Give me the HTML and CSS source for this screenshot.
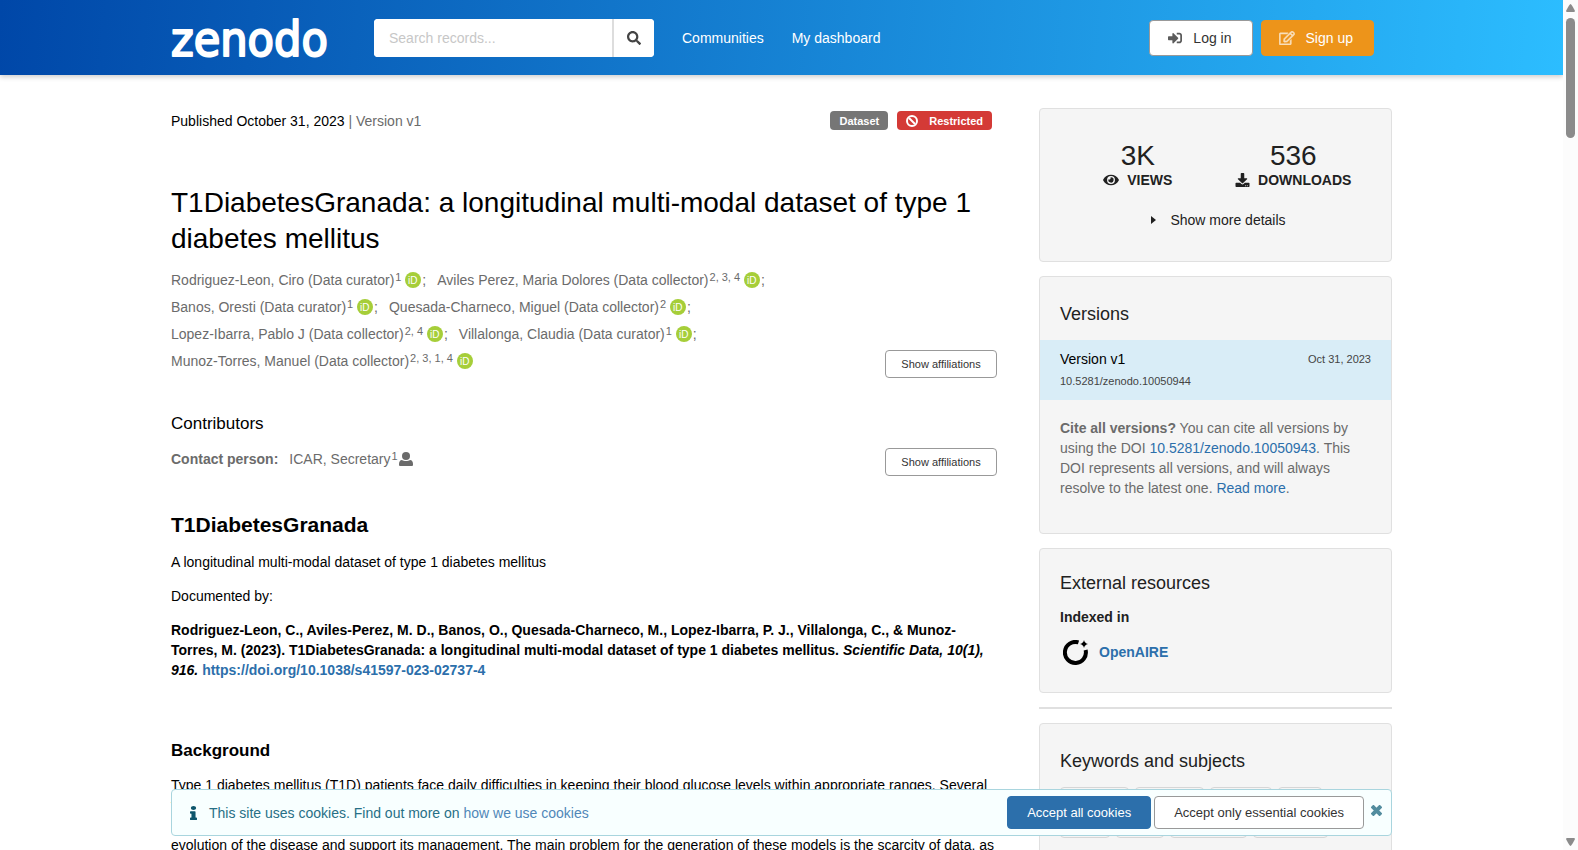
FILE: index.html
```html
<!DOCTYPE html>
<html lang="en">
<head>
    <meta charset="UTF-8">
    <meta name="viewport" content="width=device-width, initial-scale=1.0">
    <title>T1DiabetesGranada: a longitudinal multi-modal dataset of type 1 diabetes mellitus</title>
    <link rel="stylesheet" href="styles.css">
</head>
<body>
    <!-- Shared icons -->
    <svg class="sprite" aria-hidden="true">
        <symbol id="orcid" viewBox="0 0 16 16">
            <circle cx="8" cy="8" r="8" fill="#a6ce39"/>
            <text x="3" y="12" font-family="Liberation Sans, sans-serif" font-size="10" fill="#fff">iD</text>
        </symbol>
    </svg>

    <header class="header">
        <div class="container header-inner">
            <a href="#" class="logo" aria-label="Zenodo home">
                <svg width="160" height="60" viewBox="0 0 160 60">
                    <text x="0" y="48" class="logo-text">zenodo</text>
                </svg>
            </a>
            <form class="search">
                <input type="text" placeholder="Search records..." aria-label="Search records">
                <button type="button" aria-label="Search">
                    <svg width="14" height="14" viewBox="0 0 512 512"><path d="M505 442.700L405.300 343c-4.500-4.500-10.600-7-17-7H372c27.600-35.300 44-79.700 44-128C416 93.100 322.900 0 208 0S0 93.100 0 208s93.100 208 208 208c48.300 0 92.700-16.400 128-44v16.300c0 6.400 2.500 12.500 7 17l99.700 99.700c9.400 9.400 24.600 9.400 33.900 0l28.300-28.300c9.400-9.400 9.400-24.600.1-34zM208 336c-70.700 0-128-57.200-128-128 0-70.700 57.200-128 128-128 70.700 0 128 57.200 128 128 0 70.700-57.200 128-128 128z"/></svg>
                </button>
            </form>
            <nav class="nav">
                <a href="#">Communities</a>
                <a href="#">My dashboard</a>
            </nav>
            <div class="account">
                <button class="button login">
                    <svg width="14" height="14" viewBox="0 0 512 512"><path d="M416 448h-84c-6.600 0-12-5.400-12-12v-40c0-6.600 5.400-12 12-12h84c17.700 0 32-14.300 32-32V160c0-17.700-14.300-32-32-32h-84c-6.600 0-12-5.400-12-12V76c0-6.600 5.400-12 12-12h84c53 0 96 43 96 96v192c0 53-43 96-96 96zm-47-201L201 79c-15-15-41-4.500-41 17v96H24c-13.300 0-24 10.700-24 24v96c0 13.300 10.700 24 24 24h136v96c0 21.500 26 32 41 17l168-168c9.300-9.400 9.300-24.600 0-34z"/></svg>
                    Log in
                </button>
                <button class="button signup">
                    <svg width="16" height="14" viewBox="0 0 576 512"><path d="M402.300 344.900l32-32c5-5 13.700-1.500 13.700 5.700V464c0 26.500-21.500 48-48 48H48c-26.500 0-48-21.500-48-48V112c0-26.500 21.500-48 48-48h273.500c7.100 0 10.700 8.600 5.700 13.700l-32 32c-1.500 1.500-3.500 2.300-5.700 2.300H48v352h352V350.500c0-2.100.8-4.100 2.300-5.600zm156.600-201.800L296.300 405.700l-90.400 10c-26.200 2.900-48.500-19.200-45.600-45.600l10-90.400L432.900 17.100c22.900-22.900 59.900-22.900 82.700 0l43.200 43.200c22.900 22.900 22.900 60 .1 82.800zM460.100 174L402 115.900 216.200 301.800l-7.300 65.300 65.300-7.300L460.100 174zm64.800-79.700l-43.200-43.200c-4.100-4.100-10.800-4.100-14.800 0L436 82l58.100 58.100 30.900-30.900c4-4.200 4-10.800-.1-14.900z" stroke="currentColor" stroke-width="16"/></svg>
                    Sign up
                </button>
            </div>
        </div>
    </header>

    <div class="container page">
        <main class="record">
            <div class="record-top">
                <div>Published October 31, 2023 <span class="muted">| Version v1</span></div>
                <div class="labels">
                    <span class="label">Dataset</span>
                    <span class="label restricted">
                        <svg width="12" height="12" viewBox="0 0 12 12"><circle cx="6" cy="6" r="5" fill="none" stroke="currentColor" stroke-width="2"/><path d="M3 3l6 6" stroke="currentColor" stroke-width="2"/></svg>
                        Restricted
                    </span>
                </div>
            </div>

            <h1>T1DiabetesGranada: a longitudinal multi-modal dataset of type 1 diabetes mellitus</h1>

            <div class="people">
                <ul class="creators">
                    <li>Rodriguez-Leon, Ciro (Data curator)<sup>1</sup> <svg class="orcid"><use href="#orcid"/></svg>;</li>
                    <li>Aviles Perez, Maria Dolores (Data collector)<sup>2, 3, 4</sup> <svg class="orcid"><use href="#orcid"/></svg>;</li>
                    <li>Banos, Oresti (Data curator)<sup>1</sup> <svg class="orcid"><use href="#orcid"/></svg>;</li>
                    <li>Quesada-Charneco, Miguel (Data collector)<sup>2</sup> <svg class="orcid"><use href="#orcid"/></svg>;</li>
                    <li>Lopez-Ibarra, Pablo J (Data collector)<sup>2, 4</sup> <svg class="orcid"><use href="#orcid"/></svg>;</li>
                    <li>Villalonga, Claudia (Data curator)<sup>1</sup> <svg class="orcid"><use href="#orcid"/></svg>;</li>
                    <li>Munoz-Torres, Manuel (Data collector)<sup>2, 3, 1, 4</sup> <svg class="orcid"><use href="#orcid"/></svg></li>
                </ul>
                <button class="button small">Show affiliations</button>
            </div>

            <h2 class="contributors-title">Contributors</h2>
            <div class="contributors">
                <div class="contact">
                    <strong>Contact person:</strong>
                    <span>ICAR, Secretary<sup>1</sup><svg width="14" height="14" viewBox="0 0 14 14"><circle cx="7" cy="4" r="4"/><path d="M0 13v-1c0-2 1-4 3-4 2 1.400 6 1.400 8 0 2 0 3 2 3 4v1q0 1-1 1H1q-1 0-1-1z"/></svg></span>
                </div>
                <button class="button small">Show affiliations</button>
            </div>

            <section class="description">
                <h2>T1DiabetesGranada</h2>
                <p>A longitudinal multi-modal dataset of type 1 diabetes mellitus</p>
                <p>Documented by:</p>
                <p><strong>Rodriguez-Leon, C., Aviles-Perez, M. D., Banos, O., Quesada-Charneco, M., Lopez-Ibarra, P. J., Villalonga, C., &amp; Munoz-Torres, M. (2023). T1DiabetesGranada: a longitudinal multi-modal dataset of type 1 diabetes mellitus. <em>Scientific Data, 10(1), 916.</em> <a href="#">https://doi.org/10.1038/s41597-023-02737-4</a></strong></p>
                <h3>Background</h3>
                <p>Type 1 diabetes mellitus (T1D) patients face daily difficulties in keeping their blood glucose levels within appropriate ranges. Several techniques and devices, such as flash glucose meters, have been developed to help T1D patients improve their quality of life. Most recently, the data collected via these devices is being used to train advanced artificial intelligence models to characterize the evolution of the disease and support its management. The main problem for the generation of these models is the scarcity of data, as most published works use private or artificially generated datasets.</p>
            </section>
        </main>

        <aside class="sidebar">
            <section class="panel stats">
                <div class="stats-row">
                    <div class="stat">
                        <div class="stat-value">3K</div>
                        <div class="stat-name">
                            <svg width="16" height="14" viewBox="0 0 576 512"><path d="M572.520 241.400C518.290 135.590 410.930 64 288 64S57.680 135.640 3.480 241.410a32.350 32.350 0 0 0 0 29.190C57.710 376.410 165.070 448 288 448s230.320-71.640 284.520-177.410a32.350 32.350 0 0 0 0-29.190zM288 400a144 144 0 1 1 144-144 143.930 143.930 0 0 1-144 144zm0-240a95.310 95.310 0 0 0-25.310 3.790 47.850 47.850 0 0 1-66.900 66.900A95.780 95.780 0 1 0 288 160z"/></svg>
                            VIEWS
                        </div>
                    </div>
                    <div class="stat">
                        <div class="stat-value">536</div>
                        <div class="stat-name">
                            <svg width="15" height="14" viewBox="0 0 512 512"><path d="M216 0h80c13.300 0 24 10.700 24 24v168h87.700c17.800 0 26.700 21.500 14.100 34.100L269.700 378.300c-7.500 7.500-19.800 7.500-27.300 0L90.100 226.100c-12.600-12.600-3.700-34.100 14.100-34.100H192V24c0-13.300 10.700-24 24-24zm296 376v112c0 13.300-10.700 24-24 24H24c-13.300 0-24-10.700-24-24V376c0-13.300 10.700-24 24-24h146.700l49 49c20.100 20.100 52.500 20.100 72.600 0l49-49H488c13.300 0 24 10.700 24 24zm-124 88c0-11-9-20-20-20s-20 9-20 20 9 20 20 20 20-9 20-20zm64 0c0-11-9-20-20-20s-20 9-20 20 9 20 20 20 20-9 20-20z"/></svg>
                            DOWNLOADS
                        </div>
                    </div>
                </div>
                <button class="details">
                    <svg width="5" height="8" viewBox="0 0 5 8"><path d="M0 0l5 4-5 4z"/></svg>
                    Show more details
                </button>
            </section>

            <section class="panel versions">
                <h2>Versions</h2>
                <div class="version">
                    <div class="version-row">
                        <span>Version v1</span>
                        <small>Oct 31, 2023</small>
                    </div>
                    <small>10.5281/zenodo.10050944</small>
                </div>
                <p><strong>Cite all versions?</strong> You can cite all versions by using the DOI <a href="#">10.5281/zenodo.10050943</a>. This DOI represents all versions, and will always resolve to the latest one. <a href="#">Read more</a>.</p>
            </section>

            <section class="panel external">
                <h2>External resources</h2>
                <h3>Indexed in</h3>
                <a href="#" class="openaire">
                    <svg width="25" height="25" viewBox="0 0 25 25"><path d="M15.500 2.400A10.500 10.500 0 1 0 22.600 10" fill="none" stroke="#000" stroke-width="4"/><path d="M21 0q.6 3 4 4-3.400.8-4 4-.6-3.200-4-4 3.400-1 4-4z"/></svg>
                    OpenAIRE
                </a>
            </section>

            <hr>

            <section class="panel keywords">
                <h2>Keywords and subjects</h2>
                <div class="tags">
                    <a href="#">Monitoring</a>
                    <a href="#">Long-term</a>
                    <a href="#">Modeling</a>
                    <a href="#">CGM</a>
                    <a href="#">Health</a>
                    <a href="#">T1DM</a>
                    <a href="#">Longitudinal</a>
                    <a href="#">Multi-modal</a>
                </div>
            </section>
        </aside>
    </div>

    <div class="cookies-wrap">
        <div class="container cookies">
            <svg width="7" height="14" viewBox="0 0 192 512" preserveAspectRatio="none"><path d="M20 424.229h20V279.771H20c-11.046 0-20-8.954-20-20V212c0-11.046 8.954-20 20-20h112c11.046 0 20 8.954 20 20v212.229h20c11.046 0 20 8.954 20 20V492c0 11.046-8.954 20-20 20H20c-11.046 0-20-8.954-20-20v-47.771c0-11.046 8.954-20 20-20zM96 0C56.235 0 24 32.235 24 72s32.235 72 72 72 72-32.235 72-72S135.764 0 96 0z"/></svg>
            <p>This site uses cookies. Find out more on <a href="#">how we use cookies</a></p>
            <button class="button accept">Accept all cookies</button>
            <button class="button">Accept only essential cookies</button>
            <button class="close" aria-label="Close">
                <svg width="11" height="11" viewBox="0 0 11 11"><path d="M1 1l9 9M10 1l-9 9" stroke="currentColor" stroke-width="4"/></svg>
            </button>
        </div>
    </div>

    <div class="scrollbar">
        <svg width="9" height="8" viewBox="0 0 9 8"><path d="M4.500 0q1 0 4.500 7-.3 1-1 1H1q-.7 0-1-1Q3.500 0 4.500 0z"/></svg>
        <div class="thumb"></div>
        <svg width="9" height="8" viewBox="0 0 9 8"><path d="M4.500 8q-1 0-4.500-7 .3-1 1-1h7q.7 0 1 1-3.500 7-4.500 7z"/></svg>
    </div>
</body>
</html>
```
FILE: styles.css
```css
* {
    box-sizing: border-box;
}

body {
    margin: 0;
    padding-right: 15px;
    height: 100vh;
    overflow: hidden;
    font-family: "Liberation Sans", Arial, Helvetica, sans-serif;
    font-size: 14px;
    line-height: 20px;
    color: #000;
    background: #fff;
}

h1, h2, h3, p, ul {
    margin: 0;
    padding: 0;
}

a {
    color: #2c6fab;
    text-decoration: none;
}

button, input {
    font-family: inherit;
    font-size: 14px;
}

button {
    cursor: pointer;
}

svg {
    fill: currentColor;
    flex-shrink: 0;
}

sup {
    font-size: 11px;
    line-height: 0;
    vertical-align: 4px;
    margin-left: 1px;
}

.sprite {
    display: none;
}

.container {
    width: 100%;
    max-width: 1221px;
    margin: 0 auto;
}

/* Header */
.header {
    background: linear-gradient(95deg, #0047a8, #2cbdff);
    box-shadow: 0 2px 5px rgba(0, 0, 0, 0.2);
}

.header-inner {
    display: flex;
    align-items: center;
    height: 75px;
    padding-right: 18px;
}

.logo {
    height: 60px;
    margin-right: 43px;
}

.logo svg {
    display: block;
    overflow: visible;
}

.logo-text {
    font-family: "DejaVu Sans Condensed", "Liberation Sans", sans-serif;
    font-size: 48px;
    fill: #fff;
    stroke: #fff;
    stroke-width: 2px;
    stroke-linejoin: round;
}

.search {
    display: flex;
    width: 280px;
    height: 38px;
    border-radius: 4px;
    background: #fff;
    overflow: hidden;
}

.search input {
    flex: 1;
    min-width: 0;
    padding: 0 15px;
    border: none;
    outline: none;
}

.search input::placeholder {
    color: #c7c7c7;
}

.search button {
    width: 42px;
    padding: 0;
    border: none;
    border-left: 2px solid #ddd;
    background: #fff;
    color: #444;
}

.search button svg {
    display: block;
    margin: 0 auto;
}

.nav {
    display: flex;
    gap: 28px;
    margin-left: 28px;
}

.nav a {
    color: #fff;
}

.account {
    display: flex;
    gap: 8px;
    margin-left: auto;
}

.button {
    display: flex;
    flex-shrink: 0;
    align-items: center;
    justify-content: center;
    height: 33px;
    padding: 0 19px;
    border: 1px solid #999;
    border-radius: 4px;
    background: #fff;
    color: #333;
    font-size: 13px;
    white-space: nowrap;
}

.account .button {
    gap: 11px;
    height: 36px;
    padding: 0 20px 0 18px;
    font-size: 14px;
}

.account svg {
    opacity: 0.8;
}

.account .signup {
    padding-left: 17px;
    border-color: #ed941a;
    background: #ed941a;
    color: #fff;
}

.account .signup svg {
    opacity: 0.7;
}

.button.small {
    width: 112px;
    height: 28px;
    padding: 0;
    font-size: 11px;
}

/* Record */
.page {
    display: grid;
    grid-template-columns: minmax(0, 1fr) 353px;
    gap: 42px;
    padding-top: 33px;
}

.record-top {
    display: flex;
    justify-content: space-between;
    padding: 3px 5px 0 0;
    margin-bottom: 54px;
}

.muted {
    color: #6b6b6b;
}

.labels {
    display: flex;
    align-items: flex-start;
    gap: 9px;
}

.label {
    display: flex;
    align-items: center;
    gap: 11px;
    height: 19px;
    padding: 0 9px;
    border-radius: 4px;
    background: #767676;
    color: #fff;
    font-size: 11px;
    font-weight: bold;
}

.label.restricted {
    background: #d43a36;
}

h1 {
    font-size: 28px;
    line-height: 36px;
    font-weight: normal;
    margin-bottom: 10px;
}

.people {
    display: flex;
    align-items: flex-end;
    justify-content: space-between;
    gap: 14px;
}

.creators {
    display: flex;
    flex-wrap: wrap;
    column-gap: 11px;
    margin-bottom: 3px;
    list-style: none;
    line-height: 27px;
    color: #6b6b6b;
}

.orcid {
    width: 16px;
    height: 16px;
    margin-right: 1px;
    vertical-align: -3px;
}

.contributors-title {
    margin: 35px 0 13px;
    font-size: 17px;
    line-height: 22px;
    font-weight: normal;
}

.contributors {
    display: flex;
    justify-content: space-between;
    margin-bottom: 35px;
}

.contact {
    display: flex;
    gap: 11px;
    padding-top: 1px;
    color: #6b6b6b;
}

.contact svg {
    margin-left: 1px;
    vertical-align: -2px;
}

.description h2 {
    font-size: 21px;
    line-height: 27px;
    margin-bottom: 14px;
}

.description h3 {
    font-size: 17px;
    line-height: 22px;
    margin: 60px 0 13px;
}

.description p {
    margin-bottom: 14px;
}

/* Sidebar */
.sidebar {
    display: flex;
    flex-direction: column;
    gap: 14px;
    color: #212121;
}

.panel {
    padding: 25px 20px 35px;
    border: 1px solid #e0e0e0;
    border-radius: 4px;
    background: #f5f5f5;
}

.panel h2 {
    font-size: 18px;
    line-height: 24px;
    font-weight: normal;
}

.stats {
    padding: 33px 20px 31px;
}

.stats-row {
    display: grid;
    grid-template-columns: 1fr 1fr;
    margin-bottom: 20px;
    text-align: center;
}

.stat-value {
    font-size: 28px;
    line-height: 28px;
}

.stat-name {
    display: flex;
    align-items: center;
    justify-content: center;
    gap: 8px;
    font-weight: bold;
}

.details {
    display: flex;
    align-items: center;
    gap: 14px;
    margin: 0 auto;
    padding: 0 0 0 6px;
    border: none;
    background: none;
    color: inherit;
    line-height: 20px;
}

.versions h2 {
    margin-bottom: 14px;
}

.version {
    height: 60px;
    margin: 0 -20px 18px;
    padding: 9px 20px;
    background: #d9edf7;
    color: #000;
}

.version-row {
    display: flex;
    justify-content: space-between;
    margin-bottom: 1px;
}

.version small {
    font-size: 11px;
    color: #444;
}

.versions p {
    color: #6b6b6b;
}

.external {
    padding: 22px 20px 26px;
}

.external h3 {
    margin: 12px 0 11px;
    font-size: 14px;
    line-height: 20px;
}

.openaire {
    display: flex;
    align-items: center;
    gap: 11px;
    padding-left: 3px;
    font-weight: bold;
    line-height: 28px;
}

.openaire svg {
    fill: #000;
}

hr {
    width: 100%;
    margin: 0;
    border: none;
    border-top: 2px solid #e0e0e0;
}

.tags {
    display: flex;
    flex-wrap: wrap;
    gap: 5px 6px;
    margin-top: 14px;
}

.tags a {
    padding: 0 8px;
    border: 1px solid #d6d6d6;
    border-radius: 4px;
    color: #444;
    font-size: 11px;
    line-height: 21px;
}

/* Cookie banner */
.cookies-wrap {
    position: fixed;
    left: 0;
    right: 15px;
    bottom: 14px;
}

.cookies {
    display: flex;
    align-items: center;
    height: 47px;
    padding: 0 9px 0 18px;
    border: 1px solid #a9d5de;
    border-radius: 4px;
    background: #f8ffff;
    color: #276f86;
}

.cookies > svg {
    color: #0e566c;
}

.cookies p {
    flex: 1;
    margin-left: 12px;
}

.cookies p a {
    color: #5087b8;
}

.cookies .button {
    margin-left: 3px;
}

.cookies .accept {
    border-color: #2c6fab;
    background: #2c6fab;
    color: #fff;
}

.close {
    margin: 0 0 5px 7px;
    padding: 0;
    border: none;
    background: none;
    color: #528c9e;
    line-height: 0;
}

/* Scrollbar */
.scrollbar {
    position: fixed;
    top: 0;
    right: 0;
    bottom: 0;
    display: flex;
    flex-direction: column;
    align-items: center;
    width: 15px;
    padding: 4px 0;
    background: #fcfcfc;
    color: #8b8b8b;
}

.scrollbar .thumb {
    width: 9px;
    height: 120px;
    margin: 6px 0 auto;
    border-radius: 5px;
    background: #8b8b8b;
}
```
